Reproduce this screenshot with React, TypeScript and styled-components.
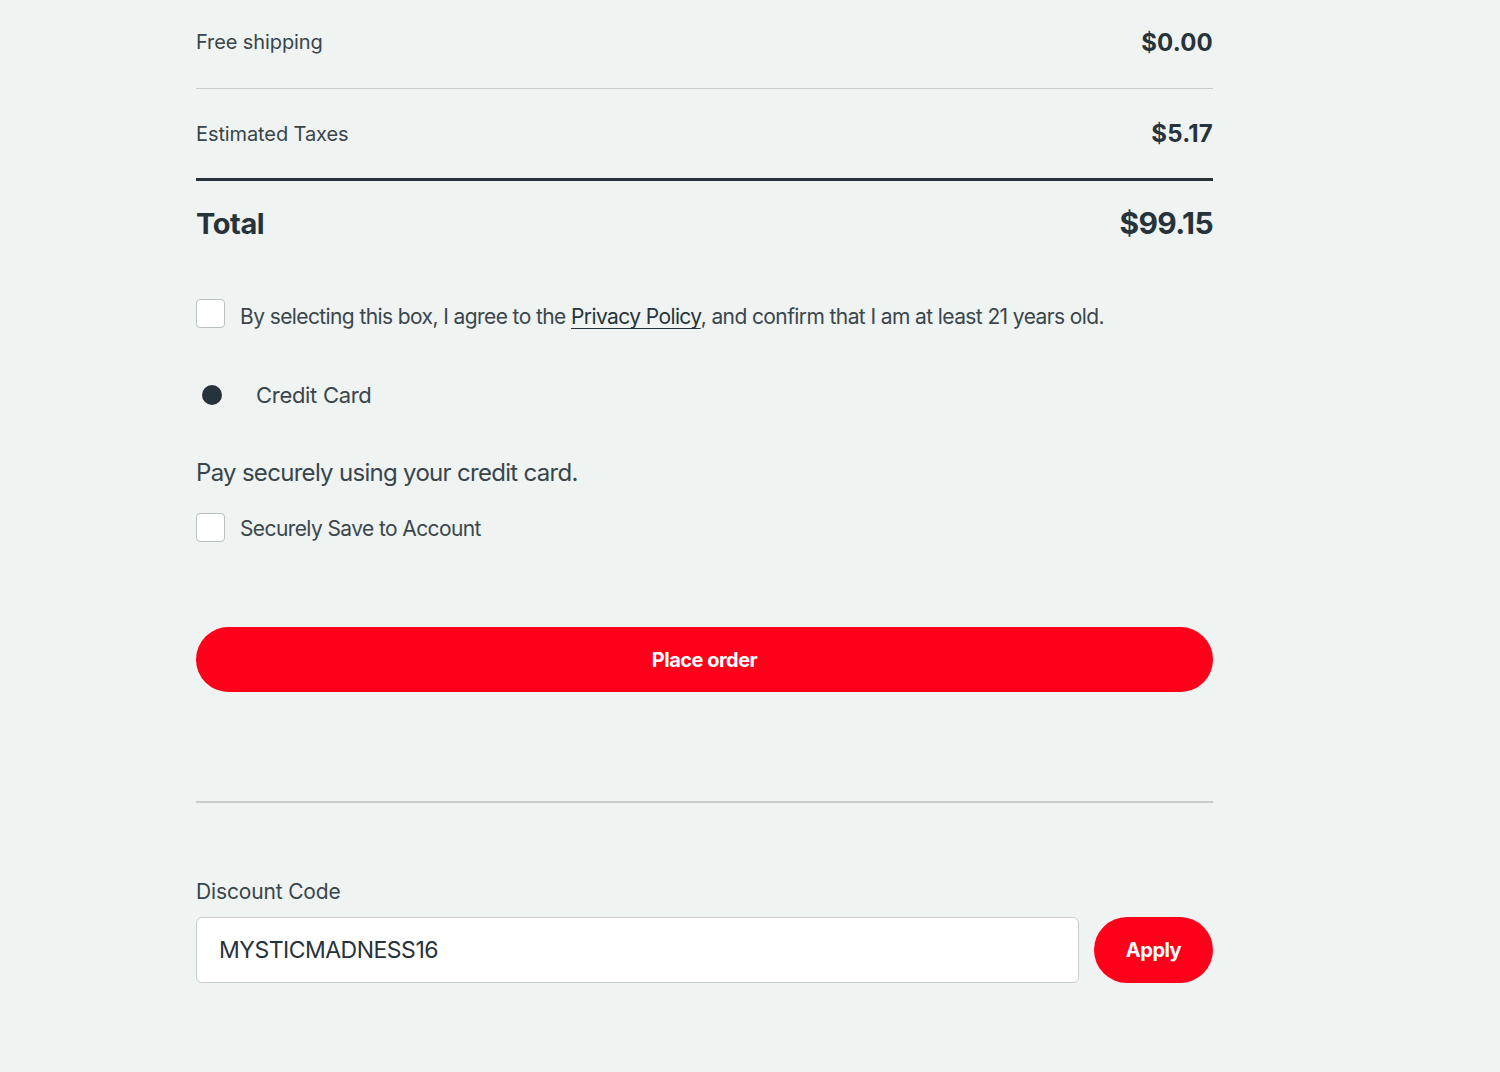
import React from 'react';
import styled, { createGlobalStyle } from 'styled-components';

const GlobalStyle = createGlobalStyle`
	html, body {
		margin: 0;
		padding: 0;
		background: #eff3f2;
	}
	body {
		font-family: Inter, "Noto Sans", "Liberation Sans", sans-serif;
		color: #2b363c;
	}
`;

const Page = styled.div`
	width: 1500px;
	height: 1072px;
	background: #eff3f2;
	overflow: hidden;
`;

const Column = styled.div`
	width: 1017px;
	margin-left: 196px;
	display: flex;
	flex-direction: column;
`;

const SummaryRow = styled.div<{ $thick?: boolean }>`
	display: flex;
	justify-content: space-between;
	align-items: center;
	height: 89px;
	border-bottom: ${p => (p.$thick ? '3px solid #27333a' : '1px solid #c6cbcb')};

	&:first-child {
		height: 84px;
		padding-bottom: 4px;
	}
`;

const RowLabel = styled.span`
	font-size: 20px;
	letter-spacing: -0.1px;
	color: #38454b;
`;

const RowValue = styled.span`
	font-size: 24px;
	font-weight: 700;
	letter-spacing: 0.2px;
	color: #27333a;
`;

const TotalRow = styled.div`
	display: flex;
	justify-content: space-between;
	align-items: center;
	padding-top: 25px;
	height: 34px;
`;

const TotalLabel = styled.span`
	font-size: 29px;
	font-weight: 700;
	letter-spacing: -0.4px;
	color: #27333a;
`;

const TotalValue = styled.span`
	font-size: 30px;
	font-weight: 700;
	letter-spacing: -0.6px;
	color: #27333a;
`;

const CheckRow = styled.label<{ $mt: number; $pt: number }>`
	display: flex;
	align-items: center;
	gap: 15px;
	margin-top: ${p => p.$mt}px;
	cursor: pointer;

	& > span:last-child {
		padding-top: ${p => p.$pt}px;
	}
`;

const Box = styled.span`
	width: 29px;
	height: 29px;
	box-sizing: border-box;
	border: 1px solid #b9c0c2;
	border-radius: 4px;
	background: #ffffff;
	flex-shrink: 0;
`;

const CheckText = styled.span`
	font-size: 21px;
	line-height: 25px;
	letter-spacing: -0.6px;
	color: #3a464c;
`;

const PolicyLink = styled.a`
	color: #27333a;
	text-decoration: underline;
	text-underline-offset: 4px;
	text-decoration-thickness: 1px;
`;

const RadioRow = styled.div`
	display: flex;
	align-items: center;
	gap: 28px;
	margin-top: 51px;
	height: 30px;
`;

const RadioSlot = styled.span`
	width: 32px;
	display: flex;
	justify-content: center;
`;

const RadioDot = styled.span`
	width: 20px;
	height: 20px;
	border-radius: 50%;
	background: #27333a;
`;

const RadioText = styled.span`
	font-size: 22px;
	letter-spacing: -0.3px;
	color: #3a464c;
`;

const PayText = styled.p`
	margin: 47px 0 0;
	font-size: 24px;
	line-height: 32px;
	letter-spacing: -0.7px;
	color: #38454b;
`;

const PlaceButton = styled.button`
	margin-top: 85px;
	height: 65px;
	border: none;
	border-radius: 33px;
	background: #ff001b;
	color: #ffffff;
	font-family: inherit;
	font-size: 20px;
	font-weight: 700;
	letter-spacing: -0.5px;
	cursor: pointer;
`;

const Divider = styled.hr`
	margin: 109px 0 0;
	border: none;
	border-top: 2px solid #c6cbcb;
`;

const FieldLabel = styled.label`
	margin-top: 75px;
	font-size: 21px;
	line-height: 28px;
	letter-spacing: -0.15px;
	color: #38454b;
`;

const DiscountRow = styled.div`
	display: flex;
	gap: 15px;
	margin-top: 11px;
`;

const CodeInput = styled.input`
	flex: 1;
	height: 66px;
	box-sizing: border-box;
	padding: 0 22px;
	border: 1px solid #c9cdce;
	border-radius: 6px;
	background: #ffffff;
	font-family: inherit;
	font-size: 23px;
	letter-spacing: -0.5px;
	color: #27333a;
	outline: none;
`;

const ApplyButton = styled.button`
	width: 119px;
	height: 66px;
	border: none;
	border-radius: 33px;
	background: #ff001b;
	color: #ffffff;
	font-family: inherit;
	font-size: 20px;
	font-weight: 700;
	letter-spacing: -0.5px;
	cursor: pointer;
`;

export default function App() {
	return (
		<Page>
			<GlobalStyle />
			<Column>
				<SummaryRow>
					<RowLabel>Free shipping</RowLabel>
					<RowValue>$0.00</RowValue>
				</SummaryRow>
				<SummaryRow $thick>
					<RowLabel>Estimated Taxes</RowLabel>
					<RowValue>$5.17</RowValue>
				</SummaryRow>
				<TotalRow>
					<TotalLabel>Total</TotalLabel>
					<TotalValue>$99.15</TotalValue>
				</TotalRow>

				<CheckRow $mt={58} $pt={6}>
					<Box />
					<CheckText>
						By selecting this box, I agree to the <PolicyLink href="#">Privacy Policy</PolicyLink>, and confirm that I am at least 21 years old.
					</CheckText>
				</CheckRow>

				<RadioRow>
					<RadioSlot>
						<RadioDot />
					</RadioSlot>
					<RadioText>Credit Card</RadioText>
				</RadioRow>

				<PayText>Pay securely using your credit card.</PayText>

				<CheckRow $mt={24} $pt={1}>
					<Box />
					<CheckText>Securely Save to Account</CheckText>
				</CheckRow>

				<PlaceButton>Place order</PlaceButton>

				<Divider />

				<FieldLabel>Discount Code</FieldLabel>
				<DiscountRow>
					<CodeInput defaultValue="MYSTICMADNESS16" />
					<ApplyButton>Apply</ApplyButton>
				</DiscountRow>
			</Column>
		</Page>
	);
}
